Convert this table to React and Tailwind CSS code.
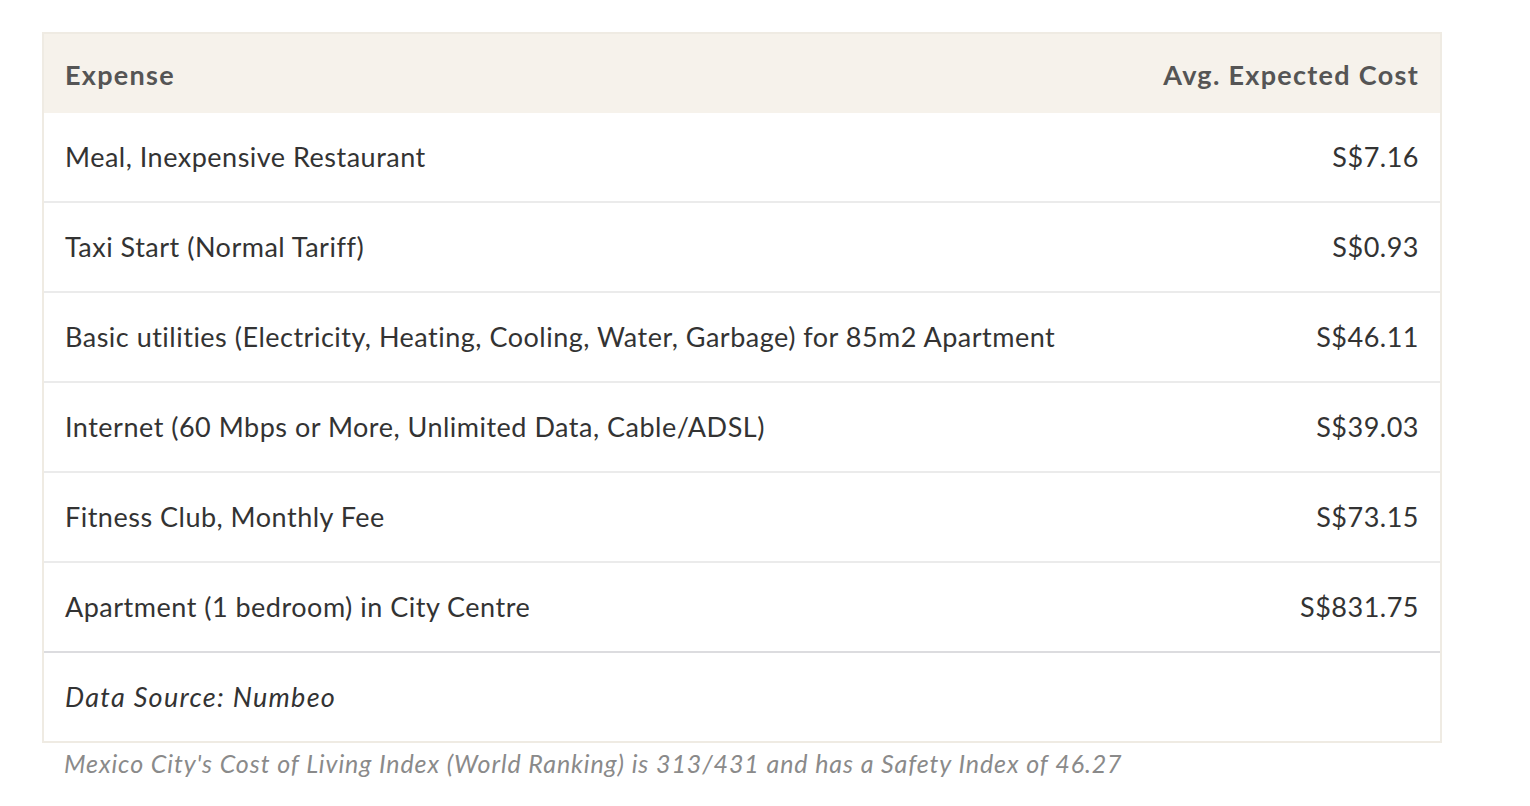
const rows = [
  { name: "Meal, Inexpensive Restaurant", cost: "S$7.16" },
  { name: "Taxi Start (Normal Tariff)", cost: "S$0.93" },
  { name: "Basic utilities (Electricity, Heating, Cooling, Water, Garbage) for 85m2 Apartment", cost: "S$46.11" },
  { name: "Internet (60 Mbps or More, Unlimited Data, Cable/ADSL)", cost: "S$39.03" },
  { name: "Fitness Club, Monthly Fee", cost: "S$73.15" },
  { name: "Apartment (1 bedroom) in City Centre", cost: "S$831.75" },
];

export default function App() {
  return (
    <div className="min-h-screen bg-white pt-8 pl-[42px]" style={{ fontFamily: "Lato, 'Open Sans', sans-serif" }}>
      <div className="w-[1400px] border-2 border-[#efebe3]">
        <div className="flex h-[79px] items-center justify-between bg-[#f6f2eb] px-[21px] pt-[3px] text-[27px] font-bold tracking-[1.3px] text-[#555]">
          <span>Expense</span>
          <span>Avg. Expected Cost</span>
        </div>
        {rows.map((row, i) => (
          <div
            key={row.name}
            className={
              "flex h-[90px] items-center justify-between border-b-2 px-[21px] pt-[1px] text-[27px] tracking-[0.5px] text-[#333] " +
              (i === rows.length - 1 ? "border-[#dcdcdf]" : "border-[#ebebeb]")
            }
          >
            <span>{row.name}</span>
            <span>{row.cost}</span>
          </div>
        ))}
        <div className="flex h-[88px] items-center px-[21px] text-[27px] italic tracking-[1.3px] text-[#333]">
          Data Source: Numbeo
        </div>
      </div>
      <p className="mt-[2px] pl-[22px] text-[25px] italic tracking-[0.9px] text-[#8a8a8a]">
        Mexico City's Cost of Living Index (World Ranking) is 313/431 and has a Safety Index of 46.27
      </p>
    </div>
  );
}
